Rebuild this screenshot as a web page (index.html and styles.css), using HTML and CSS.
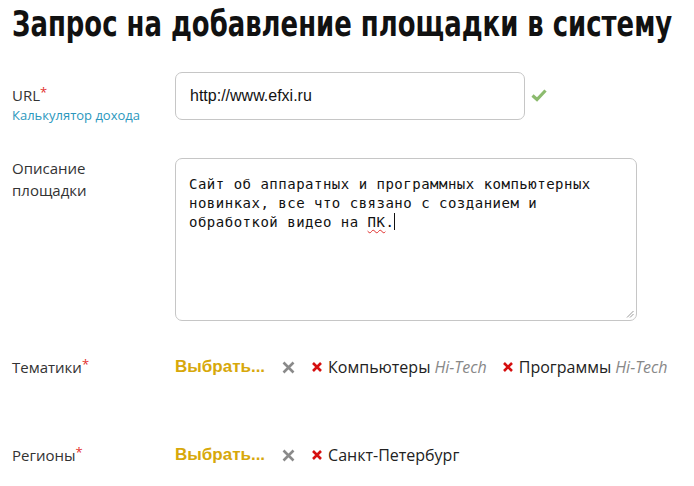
FILE: index.html
```html
<!DOCTYPE html>
<html>
<head>
    <title>Запрос на добавление площадки</title>
    <link rel="stylesheet" href="styles.css">
</head>
<body>
    <h1><span class="title">Запрос на добавление площадки в систему</span></h1>
    <form class="site-form" action="#">
        <div class="row row-url">
            <div class="label">
                URL<span class="req">*</span>
                <a class="calc" href="#">Калькулятор дохода</a>
            </div>
            <div class="field field-url">
                <div class="input">http://www.efxi.ru</div>
                <svg class="ok" width="16" height="14" viewBox="0 0 16 14">
                    <path d="M1.5 7.5 L6 11.5 L14.5 2.5" fill="none" stroke="#8cbb6e" stroke-width="3.2"/>
                </svg>
            </div>
        </div>

        <div class="row row-desc">
            <div class="label">Описание<br>площадки</div>
            <div class="field">
                <div class="textarea">Сайт об аппаратных и программных компьютерных новинках, все что связано с созданием и обработкой видео на <span class="typo">ПК</span>.<span class="caret"></span>
                    <svg class="grip" width="8" height="8" viewBox="0 0 8 8">
                        <path d="M7.5 1 L1 7.5 M7.5 4 L4 7.5" stroke="#999" stroke-width="1"/>
                    </svg>
                </div>
            </div>
        </div>

        <div class="row row-tags">
            <div class="label">Тематики<span class="req">*</span></div>
            <div class="field tags">
                <a class="choose" href="#">Выбрать...</a>
                <svg class="clear" width="13" height="13" viewBox="0 0 13 13">
                    <path d="M1.5 1.5 L11.5 11.5 M11.5 1.5 L1.5 11.5" stroke="#8a8a8a" stroke-width="2.6"/>
                </svg>
                <span class="tag">
                    <svg class="del" width="10" height="10" viewBox="0 0 10 10">
                        <path d="M1 1 L9 9 M9 1 L1 9" stroke="#d50f0f" stroke-width="2.6"/>
                    </svg>Компьютеры <i>Hi-Tech</i>
                </span>
                <span class="tag">
                    <svg class="del" width="10" height="10" viewBox="0 0 10 10">
                        <path d="M1 1 L9 9 M9 1 L1 9" stroke="#d50f0f" stroke-width="2.6"/>
                    </svg>Программы <i>Hi-Tech</i>
                </span>
            </div>
        </div>

        <div class="row row-regions">
            <div class="label">Регионы<span class="req">*</span></div>
            <div class="field tags">
                <a class="choose" href="#">Выбрать...</a>
                <svg class="clear" width="13" height="13" viewBox="0 0 13 13">
                    <path d="M1.5 1.5 L11.5 11.5 M11.5 1.5 L1.5 11.5" stroke="#8a8a8a" stroke-width="2.6"/>
                </svg>
                <span class="tag">
                    <svg class="del" width="10" height="10" viewBox="0 0 10 10">
                        <path d="M1 1 L9 9 M9 1 L1 9" stroke="#d50f0f" stroke-width="2.6"/>
                    </svg>Санкт-Петербург
                </span>
            </div>
        </div>
    </form>
</body>
</html>
```

FILE: styles.css
```css
body {
    font-family: "Open Sans", sans-serif;
    font-size: 15px;
    color: #333;
    margin: 0;
    padding: 0 12px;
    background: #fff;
}

h1 {
    font-family: "DejaVu Sans Condensed", "DejaVu Sans", sans-serif;
    font-weight: bold;
    font-size: 36px;
    line-height: 48px;
    height: 48px;
    color: #111;
    margin: 0;
    white-space: nowrap;
    overflow: hidden;
}

.title {
    display: inline-block;
    transform: scaleX(0.8);
    transform-origin: left center;
}

.row {
    display: flex;
    align-items: flex-start;
}

.label {
    width: 163px;
    flex: none;
    line-height: 22px;
}

.req {
    color: #e2302e;
    font-size: 13px;
    vertical-align: top;
    line-height: 16px;
}

.calc {
    display: block;
    font-size: 13px;
    line-height: 18px;
    color: #2b97bd;
    text-decoration: none;
}

.field {
    display: flex;
    align-items: center;
}

.row-url {
    margin-top: 24px;
}

.row-url .label {
    padding-top: 12px;
}

.input {
    box-sizing: border-box;
    width: 350px;
    height: 48px;
    border: 1px solid #c6c6c6;
    border-radius: 7px;
    padding: 0 14px;
    line-height: 46px;
    font-family: "Liberation Sans", Arial, sans-serif;
    font-size: 16px;
    color: #111;
}

.ok {
    margin-left: 6px;
    margin-top: -2px;
}

.row-desc {
    margin-top: 34px;
}

.row-desc .label {
    margin-top: -1px;
}

.textarea {
    position: relative;
    box-sizing: border-box;
    width: 462px;
    height: 163px;
    border: 1px solid #c6c6c6;
    border-radius: 7px;
    padding: 16px 17px 0 13px;
    font-family: "DejaVu Sans Mono", monospace;
    font-size: 14px;
    letter-spacing: 0.5px;
    line-height: 19px;
    color: #111;
}

.typo {
    text-decoration: underline wavy #e0302e;
    text-decoration-thickness: 1px;
    text-underline-offset: 2px;
}

.caret {
    display: inline-block;
    width: 1px;
    height: 17px;
    background: #111;
    vertical-align: -3px;
}

.grip {
    position: absolute;
    right: 2px;
    bottom: 2px;
}

.row-tags {
    margin-top: 35px;
}

.row-regions {
    margin-top: 66px;
}

.tags {
    line-height: 22px;
    font-size: 16px;
    white-space: nowrap;
}

.choose {
    font-family: "Liberation Sans", Arial, sans-serif;
    font-weight: bold;
    font-size: 17px;
    color: #d7a80b;
    text-decoration: none;
}

.clear {
    margin-left: 17px;
    margin-right: 17px;
}

.tag {
    margin-right: 16px;
    color: #222;
    display: flex;
    align-items: center;
}

.tag i {
    color: #888;
    margin-left: 4px;
}

.del {
    margin-right: 6px;
}
```
